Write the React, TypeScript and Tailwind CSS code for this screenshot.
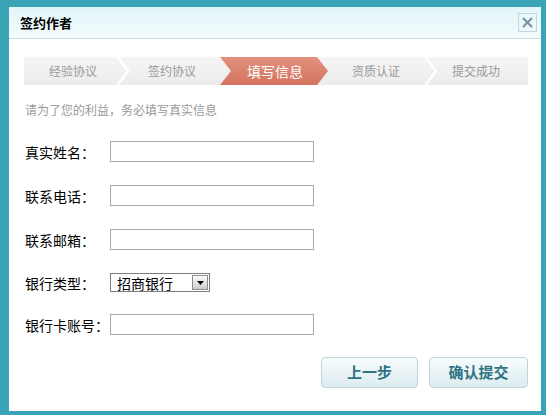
const steps = [
  { label: '经验协议', width: 'w-[98px]' },
  { label: '签约协议', width: 'w-[100px]' },
  { label: '填写信息', width: 'w-[106px]', active: true },
  { label: '资质认证', width: 'w-[96px]' },
  { label: '提交成功', width: 'w-[104px]' },
]

const fields = [
  { label: '真实姓名：', gap: 'mt-[23px]' },
  { label: '联系电话：', gap: 'mt-[23px]' },
  { label: '联系邮箱：', gap: 'mt-[23px]' },
]

function StepBar() {
  return (
    <div className="relative h-[28px] w-[504px]">
      {/* chevron background drawing */}
      <svg
        className="absolute inset-0"
        width="504"
        height="28"
        viewBox="0 0 504 28"
      >
        <defs>
          <linearGradient id="bar" x1="0" y1="0" x2="0" y2="1">
            <stop offset="0" stopColor="#f5f5f5" />
            <stop offset="1" stopColor="#ececec" />
          </linearGradient>
          <linearGradient id="active" x1="0" y1="0" x2="0" y2="1">
            <stop offset="0" stopColor="#e2917d" />
            <stop offset="1" stopColor="#d3735f" />
          </linearGradient>
        </defs>
        <rect width="504" height="28" fill="url(#bar)" />
        <polyline
          points="93,-1 104,14 93,29"
          fill="none"
          stroke="#ffffff"
          strokeWidth="2.5"
        />
        <polygon
          points="196,0 293,0 304,14 293,28 196,28 207,14"
          fill="url(#active)"
        />
        <polyline
          points="401,-1 412,14 401,29"
          fill="none"
          stroke="#ffffff"
          strokeWidth="2.5"
        />
      </svg>
      <div className="relative flex h-full">
        {steps.map((step) => (
          <div
            key={step.label}
            className={`flex h-full items-center justify-center ${step.width} ${
              step.active
                ? 'text-[14px] text-white'
                : 'text-[12px] text-[#9a9a9a]'
            }`}
          >
            {step.label}
          </div>
        ))}
      </div>
    </div>
  )
}

function Field({ label, gap }: { label: string; gap: string }) {
  return (
    <div className={`flex h-[21px] items-center pl-[1px] ${gap}`}>
      <span className="w-[85px] text-[14px] leading-none text-black">
        {label}
      </span>
      <div className="h-[21px] w-[204px] border border-[#a8a8a8] bg-white" />
    </div>
  )
}

export default function App() {
  return (
    <div className="h-[415px] w-[546px] bg-[#38a4b5] pb-[4px] pl-[9px] pr-[5px] pt-[7px] font-['Noto_Sans_CJK_SC',sans-serif]">
      <div className="flex h-full flex-col bg-white">
        <div className="flex h-[32px] shrink-0 items-center justify-between border-b border-[#c6dde3] bg-gradient-to-b from-[#e2f5f9] to-[#f4fbfc] pl-[11px] pr-[4px]">
          <h1 className="text-[13px] font-bold leading-none text-black">
            签约作者
          </h1>
          <button className="grid h-[19px] w-[19px] place-items-center border border-[#c3d6dc] bg-[#edf6f8]">
            <svg width="11" height="11" viewBox="0 0 11 11">
              <path
                d="M1 1 L10 10 M10 1 L1 10"
                stroke="#6f93a6"
                strokeWidth="2"
              />
            </svg>
          </button>
        </div>

        <div className="flex flex-col pl-[15px] pr-[13px] pt-[18px]">
          <StepBar />

          <p className="mt-[17px] pl-[1px] text-[12px] leading-[16px] text-[#9a9a9a]">
            请为了您的利益，务必填写真实信息
          </p>

          {fields.map((f) => (
            <Field key={f.label} label={f.label} gap={f.gap} />
          ))}

          <div className="mt-[23px] flex h-[19px] items-center pl-[1px]">
            <span className="w-[85px] text-[14px] leading-none text-black">
              银行类型：
            </span>
            <div className="flex h-[19px] w-[100px] items-center border border-[#7d7d7d] bg-white pl-[6px] pr-[1px]">
              <span className="text-[14px] leading-none text-black">
                招商银行
              </span>
              <span className="ml-auto grid h-[15px] w-[16px] place-items-center border border-[#8d8d8d] bg-gradient-to-b from-[#fbfbfb] to-[#cdcdcd]">
                <svg width="7" height="4" viewBox="0 0 7 4">
                  <path d="M0 0 H7 L3.5 4 Z" fill="#000" />
                </svg>
              </span>
            </div>
          </div>

          <Field label="银行卡账号：" gap="mt-[22px]" />

          <div className="mt-[22px] flex justify-end gap-[11px]">
            <button className="h-[31px] w-[97px] rounded-[4px] border border-[#bfd5dc] bg-gradient-to-b from-[#f7fcfd] to-[#ddecf0] text-[15px] font-bold text-[#2f7383]">
              上一步
            </button>
            <button className="h-[31px] w-[99px] rounded-[4px] border border-[#bfd5dc] bg-gradient-to-b from-[#f7fcfd] to-[#ddecf0] text-[15px] font-bold text-[#2f7383]">
              确认提交
            </button>
          </div>
        </div>
      </div>
    </div>
  )
}
